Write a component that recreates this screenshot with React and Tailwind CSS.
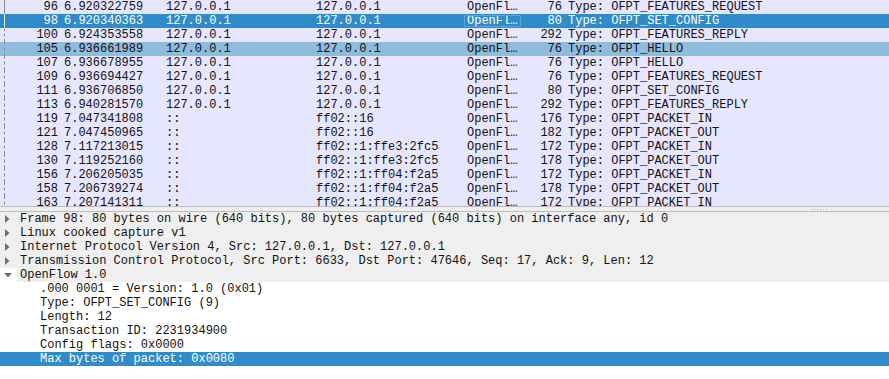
import React from "react";

const packets = [
  { no: "96", time: "6.920322759", src: "127.0.0.1", dst: "127.0.0.1", len: "76", info: "Type: OFPT_FEATURES_REQUEST" },
  { no: "98", time: "6.920340363", src: "127.0.0.1", dst: "127.0.0.1", len: "80", info: "Type: OFPT_SET_CONFIG", selected: true },
  { no: "100", time: "6.924353558", src: "127.0.0.1", dst: "127.0.0.1", len: "292", info: "Type: OFPT_FEATURES_REPLY" },
  { no: "105", time: "6.936661989", src: "127.0.0.1", dst: "127.0.0.1", len: "76", info: "Type: OFPT_HELLO", related: true },
  { no: "107", time: "6.936678955", src: "127.0.0.1", dst: "127.0.0.1", len: "76", info: "Type: OFPT_HELLO" },
  { no: "109", time: "6.936694427", src: "127.0.0.1", dst: "127.0.0.1", len: "76", info: "Type: OFPT_FEATURES_REQUEST" },
  { no: "111", time: "6.936706850", src: "127.0.0.1", dst: "127.0.0.1", len: "80", info: "Type: OFPT_SET_CONFIG" },
  { no: "113", time: "6.940281570", src: "127.0.0.1", dst: "127.0.0.1", len: "292", info: "Type: OFPT_FEATURES_REPLY" },
  { no: "119", time: "7.047341808", src: "::", dst: "ff02::16", len: "176", info: "Type: OFPT_PACKET_IN" },
  { no: "121", time: "7.047450965", src: "::", dst: "ff02::16", len: "182", info: "Type: OFPT_PACKET_OUT" },
  { no: "128", time: "7.117213015", src: "::", dst: "ff02::1:ffe3:2fc5", len: "172", info: "Type: OFPT_PACKET_IN" },
  { no: "130", time: "7.119252160", src: "::", dst: "ff02::1:ffe3:2fc5", len: "178", info: "Type: OFPT_PACKET_OUT" },
  { no: "156", time: "7.206205035", src: "::", dst: "ff02::1:ff04:f2a5", len: "172", info: "Type: OFPT_PACKET_IN" },
  { no: "158", time: "7.206739274", src: "::", dst: "ff02::1:ff04:f2a5", len: "178", info: "Type: OFPT_PACKET_OUT" },
  { no: "163", time: "7.207141311", src: "::", dst: "ff02::1:ff04:f2a5", len: "172", info: "Type: OFPT_PACKET_IN" },
];

const tree = [
  { text: "Frame 98: 80 bytes on wire (640 bits), 80 bytes captured (640 bits) on interface any, id 0", arrow: "right" },
  { text: "Linux cooked capture v1", arrow: "right" },
  { text: "Internet Protocol Version 4, Src: 127.0.0.1, Dst: 127.0.0.1", arrow: "right" },
  { text: "Transmission Control Protocol, Src Port: 6633, Dst Port: 47646, Seq: 17, Ack: 9, Len: 12", arrow: "right" },
  { text: "OpenFlow 1.0", arrow: "down", parent: true },
  { text: ".000 0001 = Version: 1.0 (0x01)", child: true },
  { text: "Type: OFPT_SET_CONFIG (9)", child: true },
  { text: "Length: 12", child: true },
  { text: "Transaction ID: 2231934900", child: true },
  { text: "Config flags: 0x0000", child: true },
  { text: "Max bytes of packet: 0x0080", child: true, selected: true },
];

const Arrow = ({ dir }) =>
  dir === "right" ? (
    <svg width="5" height="8" viewBox="0 0 5 8" className="ml-[5px]">
      <path d="M0 0 L4.5 4 L0 8 Z" fill="#6e6e6e" />
    </svg>
  ) : (
    <svg width="8" height="5" viewBox="0 0 8 5" className="ml-[4px]">
      <path d="M0 0 L8 0 L4 4.5 Z" fill="#6e6e6e" />
    </svg>
  );

const PacketRow = ({ p, index }) => {
  const bg = p.selected ? "bg-[#2f8bc9] text-white" : p.related ? "bg-[#8fbcdb] text-[#111]" : "bg-[#e7e6ff] text-[#111]";
  return (
    <div className={`flex h-[14px] leading-[14px] whitespace-nowrap ${bg}`}>
      <div className="relative w-[62px] shrink-0 pr-[4px] text-right">
        {index < 2 ? (
          <span className={`absolute left-[4px] top-0 h-[14px] w-px ${p.selected ? "bg-white" : "bg-[#8a8a8a]"}`} />
        ) : (
          <span className="absolute left-[4px] top-0 h-[14px] w-0 border-l border-dashed border-[#8a8a8a]" />
        )}
        {p.no}
      </div>
      <div className="w-[100px] shrink-0 pl-[2px]">{p.time}</div>
      <div className="w-[150px] shrink-0 pl-[4px]">{p.src}</div>
      <div className="w-[151px] shrink-0 pl-[4px]">{p.dst}</div>
      <div className="relative w-[59px] shrink-0 pl-[4px]">
        {p.selected && (
          <span className="absolute left-[1px] right-[1px] top-[1px] bottom-[1px] rounded-[1px] border border-[#5aa6da]" />
        )}
        OpenFl…
      </div>
      <div className="w-[42px] shrink-0 pr-[2px] text-right">{p.len}</div>
      <div className="flex-1 pl-[4px]">{p.info}</div>
    </div>
  );
};

const TreeRow = ({ r }) => {
  let bg = "bg-[#efefef] text-[#111]";
  if (r.child) bg = "bg-white text-[#111]";
  if (r.selected) bg = "bg-[#2f8bc9] text-white";
  return (
    <div className={`flex h-[14px] items-center leading-[14px] whitespace-nowrap ${r.parent ? "bg-white text-[#111]" : bg}`}>
      <div className="flex w-[17px] shrink-0 items-center">{r.arrow && <Arrow dir={r.arrow} />}</div>
      <div className={`flex-1 h-[14px] ${r.parent ? "bg-[#efefef]" : ""} ${r.child ? "pl-[23px]" : "pl-[3px]"}`}>{r.text}</div>
    </div>
  );
};

export default function App() {
  return (
    <div className="h-[379px] w-[889px] overflow-hidden bg-white font-['Liberation_Mono',monospace] text-[12px]">
      {/* Packet list */}
      <div className="h-[206px] overflow-hidden bg-[#e7e6ff]">
        {packets.map((p, i) => (
          <PacketRow key={p.no} p={p} index={i} />
        ))}
      </div>

      {/* Splitter */}
      <div className="flex h-[6px] items-center justify-end border-y border-[#bcbcbc] bg-[#efefef] pr-[62px]">
        <div className="flex gap-[2px]">
          {[0, 1, 2, 3, 4, 5].map((d) => (
            <span key={d} className="h-px w-px bg-[#b0b0b0]" />
          ))}
        </div>
      </div>

      {/* Packet details */}
      <div>
        {tree.map((r, i) => (
          <TreeRow key={i} r={r} />
        ))}
      </div>
    </div>
  );
}
